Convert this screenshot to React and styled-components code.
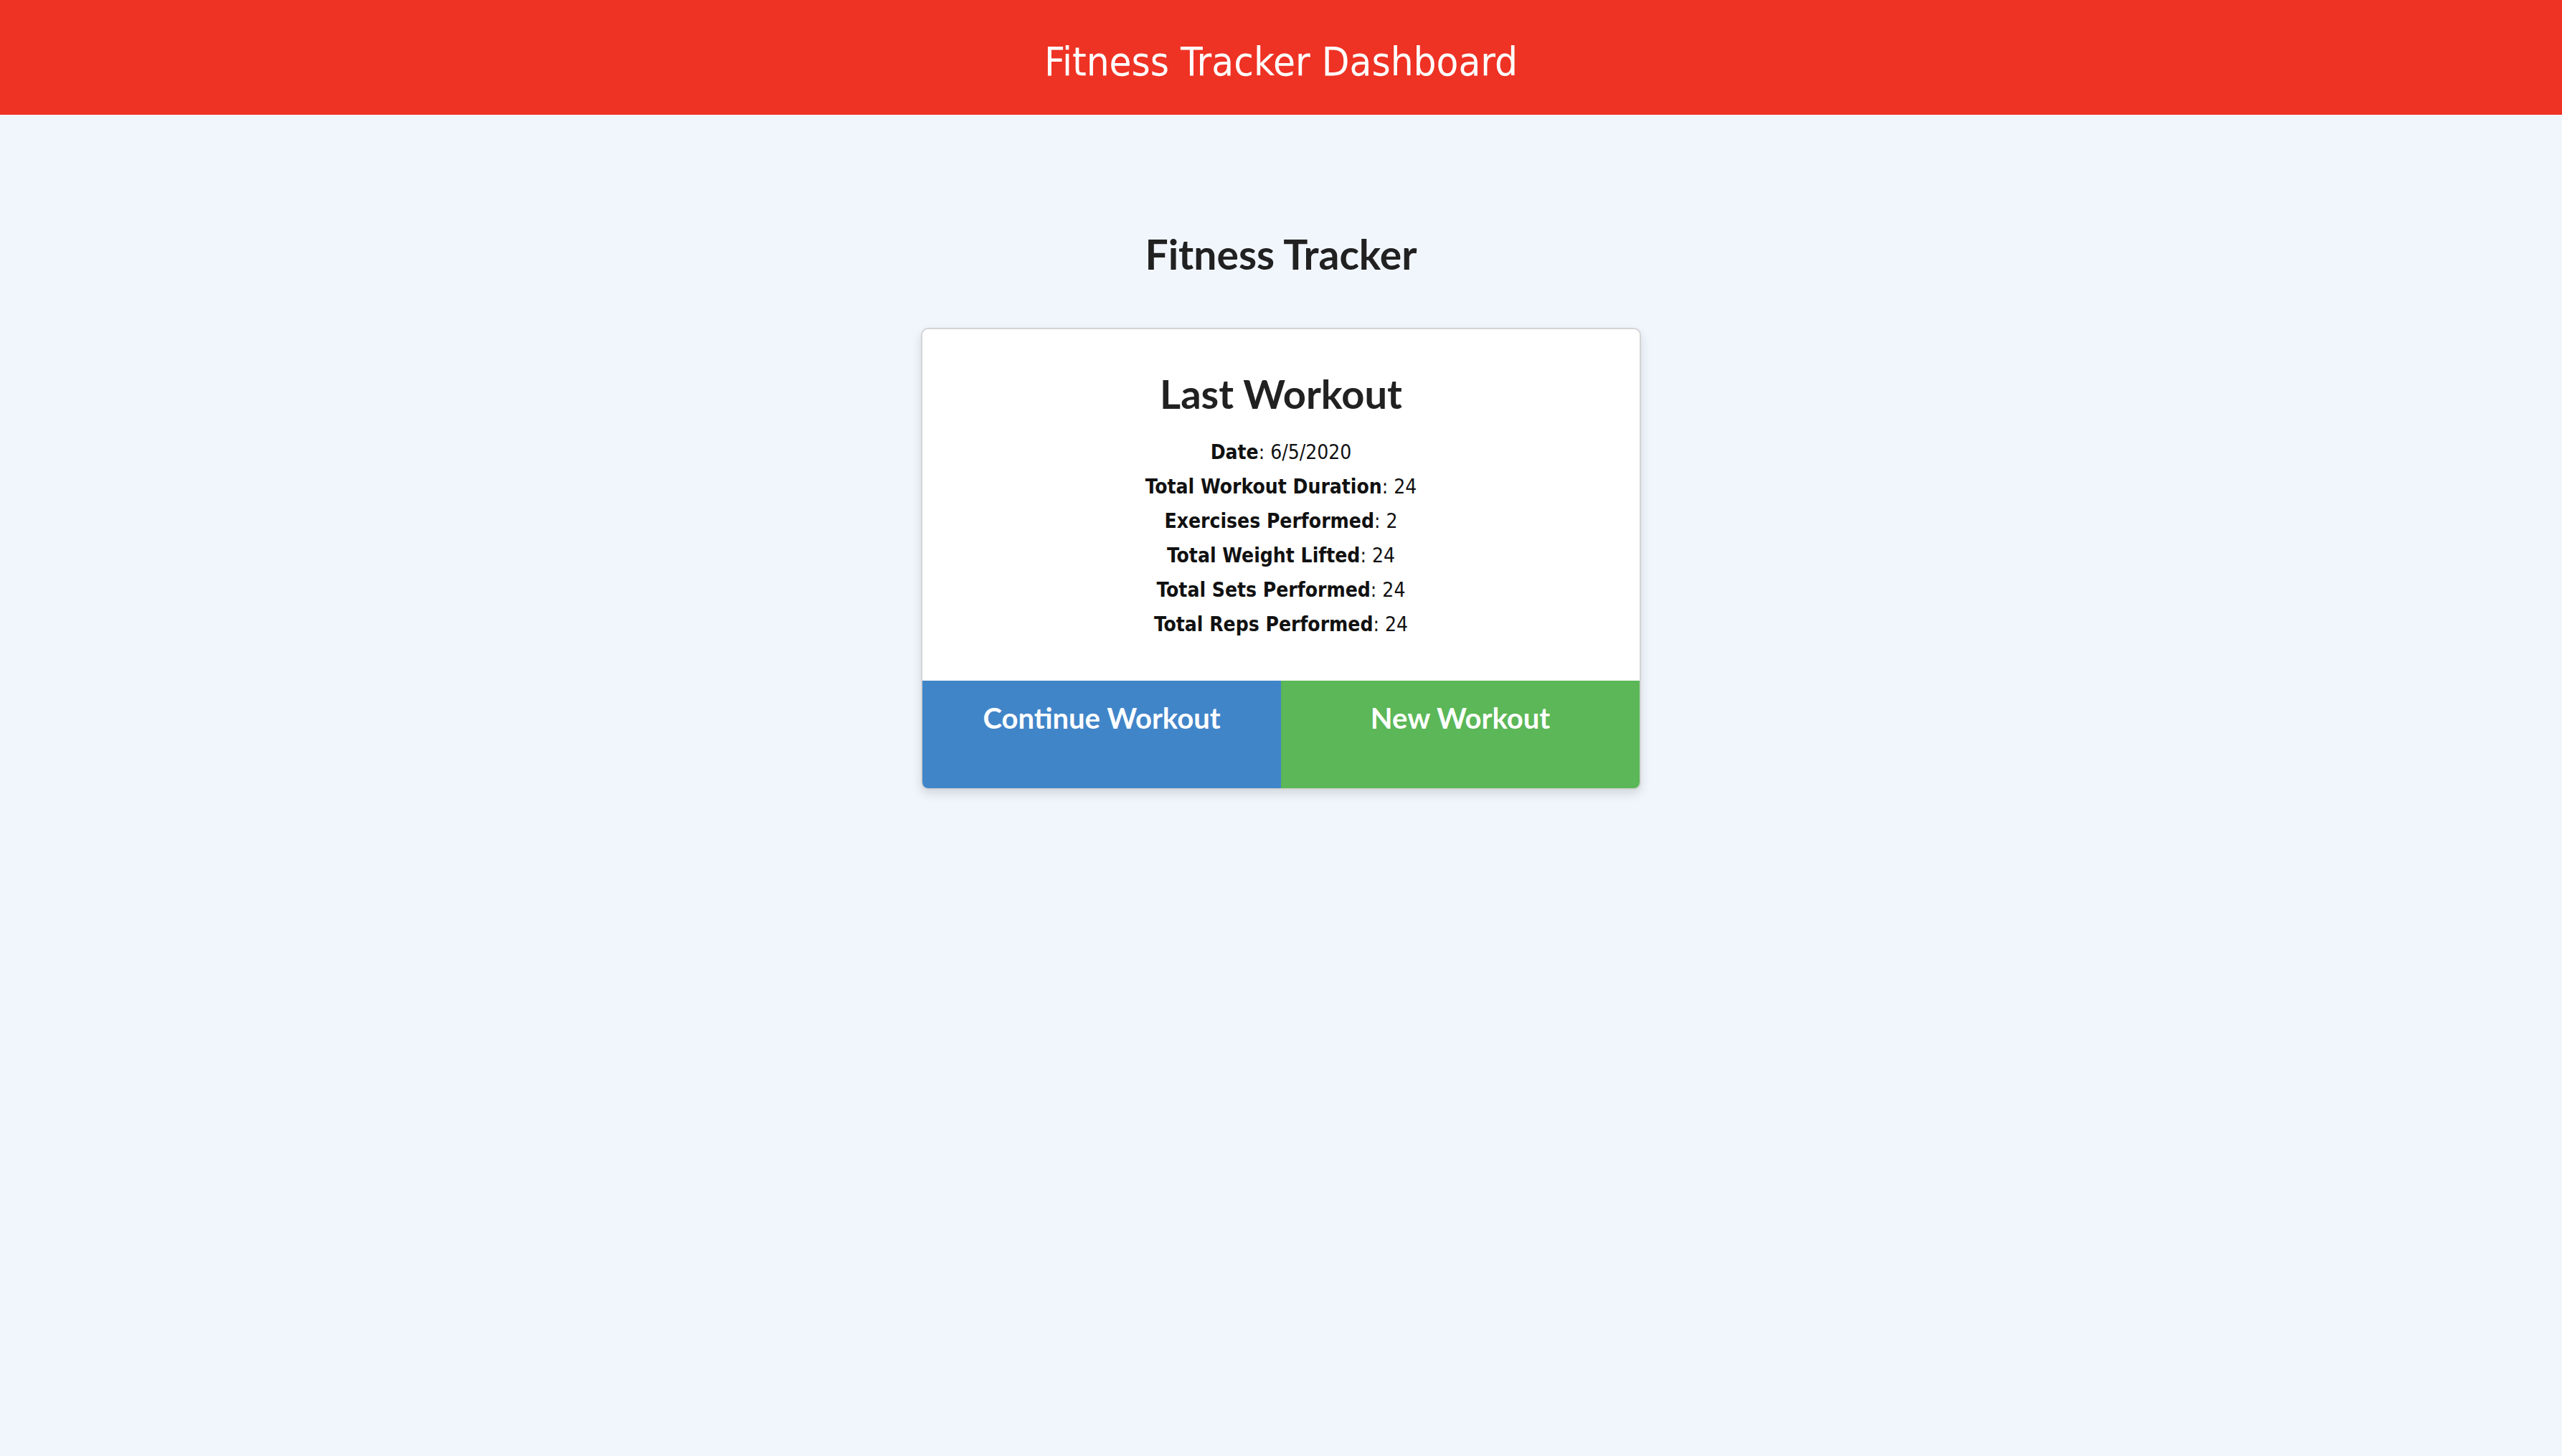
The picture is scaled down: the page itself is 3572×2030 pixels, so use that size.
import React from "react";
import styled, { createGlobalStyle } from "styled-components";

const GlobalStyle = createGlobalStyle`
  html, body {
    margin: 0;
    padding: 0;
    background: #f1f6fd;
    color: #212121;
    font-family: "Lato", "Noto Sans", sans-serif;
  }
`;

const stats = [
  { label: "Date", value: "6/5/2020" },
  { label: "Total Workout Duration", value: "24" },
  { label: "Exercises Performed", value: "2" },
  { label: "Total Weight Lifted", value: "24" },
  { label: "Total Sets Performed", value: "24" },
  { label: "Total Reps Performed", value: "24" },
];

const App = () => {
  return (
    <Page>
      <GlobalStyle />
      <Header>
        <h1>Fitness Tracker Dashboard</h1>
      </Header>
      <Main>
        <Title>Fitness Tracker</Title>
        <Card>
          <div className="card-body">
            <h2>Last Workout</h2>
            {stats.map((s) => (
              <Stat key={s.label}>
                <strong>{s.label}</strong>: {s.value}
              </Stat>
            ))}
          </div>
          <Actions>
            <ActionButton color="#4185c9">Continue Workout</ActionButton>
            <ActionButton color="#5bb757">New Workout</ActionButton>
          </Actions>
        </Card>
      </Main>
    </Page>
  );
};

const Page = styled.div`
  min-height: 100vh;
  background: #f1f6fd;
`;

const Header = styled.header`
  height: 160px;
  box-sizing: border-box;
  padding-top: 12px;
  background: #ee3224;
  display: flex;
  align-items: center;
  justify-content: center;

  h1 {
    margin: 0;
    color: #ffffff;
    font-family: "DejaVu Sans Condensed", "DejaVu Sans", sans-serif;
    font-weight: 400;
    font-size: 56px;
    line-height: 1;
  }
`;

const Main = styled.main`
  display: flex;
  flex-direction: column;
  align-items: center;
  padding-top: 160px;
`;

const Title = styled.h1`
  margin: 0 0 69px;
  font-family: "Lato", sans-serif;
  font-weight: 700;
  font-size: 57px;
  line-height: 1.2;
  color: #212121;
`;

const Card = styled.div`
  width: 1000px;
  background: #ffffff;
  border: 2px solid #d4d4d4;
  border-radius: 10px;
  overflow: hidden;
  box-shadow: 0 6px 14px rgba(0, 0, 0, 0.12);
  text-align: center;

  .card-body {
    padding: 56px 20px 54px;
  }

  h2 {
    margin: 0 0 24px;
    font-family: "Lato", sans-serif;
    font-weight: 700;
    font-size: 56px;
    line-height: 1.2;
  }
`;

const Stat = styled.p`
  margin: 0;
  font-family: "DejaVu Sans Condensed", "DejaVu Sans", sans-serif;
  font-size: 28px;
  line-height: 48px;
  color: #111111;

  strong {
    font-weight: 700;
  }
`;

const Actions = styled.div`
  display: grid;
  grid-template-columns: 1fr 1fr;
`;

const ActionButton = styled.button`
  height: 150px;
  border: none;
  margin: 0;
  padding: 28px 0 0;
  display: flex;
  justify-content: center;
  align-items: flex-start;
  background: ${(p) => p.color};
  color: #ffffff;
  font-family: "Lato", sans-serif;
  font-weight: 700;
  font-size: 40px;
  cursor: pointer;
`;

export default App;
